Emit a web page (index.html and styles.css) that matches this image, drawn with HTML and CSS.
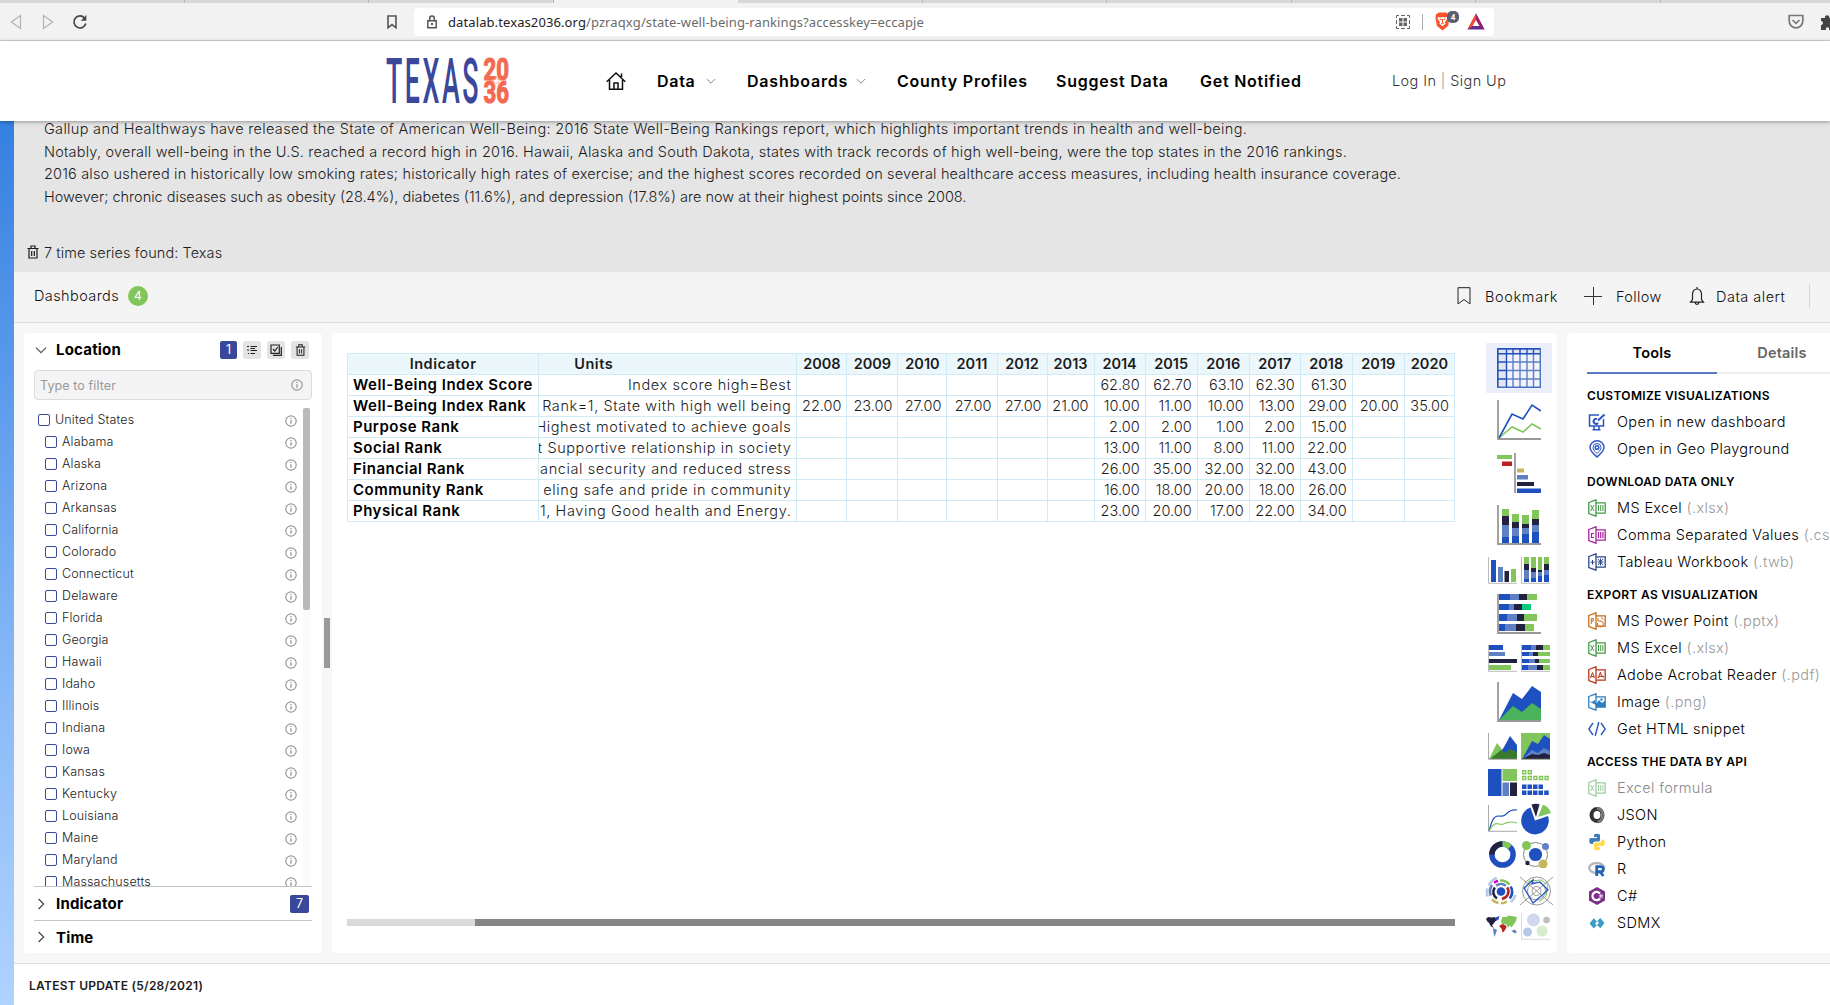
FILE: index.html
```html
<!DOCTYPE html>
<html lang="en">
<head>
<meta charset="utf-8">
<title>State Well-Being Rankings</title>
<link rel="stylesheet" href="styles.css">
</head>
<body>
<svg class="defs" width="0" height="0" aria-hidden="true">
  <symbol id="info" viewBox="0 0 12 12"><circle cx="6" cy="6" r="5.2" fill="none" stroke="#999" stroke-width="1.200"/><path d="M6 5.2v3.6M6 2.9v1.2" stroke="#999" stroke-width="1.4"/></symbol>
  <symbol id="trash" viewBox="0 0 12 14"><path d="M.5 3.5h11M4 3V1h4v2M2 4v9h8V4M4.7 6v5M7.300 6v5" fill="none" stroke="currentColor" stroke-width="1.200"/></symbol>
  <symbol id="chev" viewBox="0 0 10 10"><path d="M.8 3l4.200 4.200L9.200 3" fill="none" stroke="currentColor" stroke-width="1"/></symbol>
  <symbol id="book" viewBox="0 0 18 18"><path d="M.8 3.500L8 .8v16.400L.8 14.500zM8 3.800h9.200v10.400H8" fill="none" stroke="currentColor" stroke-width="1.300"/></symbol>
  <symbol id="excel" viewBox="0 0 18 18"><use href="#book"/><path d="M2.600 6l3.400 6M6 6l-3.400 6M10.500 6v6M12.700 6v6M14.900 6v6" stroke="currentColor" fill="none"/></symbol>
</svg>

<header class="browser">
  <div class="tabs"><i></i><i></i><i></i><i class="on"></i><i></i><i></i><i></i><i></i><i></i><i></i></div>
  <div class="toolbar">
    <svg class="b-back" width="12" height="16" viewBox="0 0 12 16"><path d="M10.500 1.500v13L1.500 8z" fill="none" stroke="#b5b5b5" stroke-width="1.300"/></svg>
    <svg class="b-fwd" width="12" height="16" viewBox="0 0 12 16"><path d="M1.500 1.500v13L10.500 8z" fill="none" stroke="#b5b5b5" stroke-width="1.300"/></svg>
    <svg class="b-reload" width="16" height="16" viewBox="0 0 16 16"><path d="M12.500 4A6 6 0 1 0 13.800 9.500" fill="none" stroke="#444" stroke-width="1.700"/><path d="M14.300 1v5.800H8.800z" fill="#444"/></svg>
    <svg class="b-mark" width="10" height="14" viewBox="0 0 10 14"><path d="M1 1h8v11.800L5 9.600l-4 3.200z" fill="none" stroke="#555" stroke-width="1.600"/></svg>
    <div class="url">
      <svg width="12" height="14" viewBox="0 0 12 14"><path d="M1.800 5.800h8.400v7H1.800zM3.700 5.500V3.300a2.300 2.300 0 0 1 4.600 0v2.200" fill="none" stroke="#555" stroke-width="1.500"/><path d="M5 8h2v2H5z" fill="#555"/></svg>
      <span class="addr"><b>datalab.texas2036.org</b>/pzraqxg/state-well-being-rankings?accesskey=eccapje</span>
      <svg class="qr" width="14" height="14" viewBox="0 0 14 14"><path d="M.5 3V.5H3M5 .5h4M11 .5h2.500V3M13.500 5v4M13.500 11v2.500H11M9 13.500H5M3 13.500H.500V11M.5 9V5" fill="none" stroke="#666"/><path d="M3 3h3.500v3.500H3zM7.500 3H11v3.500H7.500zM3 7.500h3.500V11H3zM7.500 7.500H11V11H7.500z" fill="#666"/></svg>
      <i class="sep"></i>
      <span class="shield"><svg width="15" height="19" viewBox="0 0 15 19"><path d="M3.500.5h8l1 1.200 1.500.2.500 3.600-1.300 8.300L7.500 18.500 1.800 13.800.5 5.500 1 1.900l1.500-.2z" fill="#fb542b"/><path d="M3 5l2.500.5 2-.6 2 .6L12 5l.3 2-2.300 3 .5 1.800-3 2.400-3-2.400.5-1.800-2.300-3z" fill="#fff"/><path d="M4.500 7l2 .6M10.500 7l-2 .6M7.500 7v4M6 12l1.500-.8L9 12" stroke="#fb542b" fill="none"/></svg><em>4</em></span>
      <svg class="bat" width="18" height="17" viewBox="0 0 18 17"><path d="M9 .5L17.500 16.500H.5z" fill="#662d91"/><path d="M9 .5L.5 16.500 5.500 13 9 7z" fill="#ff4724"/><path d="M9 .5l8.500 16L12.500 13 9 7z" fill="#9e1f63"/><path d="M9 7l3.500 6h-7z" fill="#fff"/></svg>
    </div>
    <svg class="pocket" width="16" height="16" viewBox="0 0 16 16"><path d="M1.200 1.500h13.600V7a6.800 6.800 0 0 1-13.600 0z" fill="none" stroke="#777" stroke-width="1.700"/><path d="M4.500 6L8 9.300 11.500 6" fill="none" stroke="#777" stroke-width="1.700"/></svg>
    <svg class="puzzle" width="16" height="16" viewBox="0 0 16 16"><path d="M1 4h4a2.200 2.200 0 1 1 4.200 0H13v4h2v4h-2v4H9v-2.500H6V16H1v-5a2 2 0 1 0 0-4z" fill="#444"/></svg>
  </div>
</header>

<nav class="nav">
  <svg class="logo" width="126" height="50" viewBox="0 0 126 50">
    <text class="logo-t" x="1" y="46.700" textLength="95" lengthAdjust="spacingAndGlyphs">TEXAS</text>
    <text class="logo-n" x="98.500" y="24" textLength="25.500" lengthAdjust="spacingAndGlyphs">20</text>
    <text class="logo-n" x="98.500" y="47" textLength="25.500" lengthAdjust="spacingAndGlyphs">36</text>
    <path d="M111.500 20.500l1.200 3h3.300l-2.600 2.100 1.100 3.400-3-2-3 2 1.100-3.400-2.600-2.100h3.300z" fill="#fff" stroke="#f26a50" stroke-width=".5"/>
  </svg>
  <svg class="home" width="20" height="18" viewBox="0 0 20 18"><path d="M.7 9.700L10 1l9.300 8.700M3.500 8v9.300h13V8M8 17v-6h4v6M15.500 5V1.500" fill="none" stroke="#111" stroke-width="1.500"/></svg>
  <span class="n-data">Data</span><svg class="nch" width="10" height="10"><use href="#chev"/></svg>
  <span class="n-dash">Dashboards</span><svg class="nch" width="10" height="10"><use href="#chev"/></svg>
  <span class="n-cp">County Profiles</span>
  <span class="n-sd">Suggest Data</span>
  <span class="n-gn">Get Notified</span>
  <span class="n-log">Log In <i>|</i> Sign Up</span>
</nav>

<div class="page">
  <section class="intro">
    <p class="l1">Gallup and Healthways have released the State of American Well-Being: 2016 State Well-Being Rankings report, which highlights important trends in health and well-being.</p>
    <p class="l2">Notably, overall well-being in the U.S. reached a record high in 2016. Hawaii, Alaska and South Dakota, states with track records of high well-being, were the top states in the 2016 rankings.</p>
    <p class="l3">2016 also ushered in historically low smoking rates; historically high rates of exercise; and the highest scores recorded on several healthcare access measures, including health insurance coverage.</p>
    <p class="l4">However; chronic diseases such as obesity (28.4%), diabetes (11.6%), and depression (17.8%) are now at their highest points since 2008.</p>
    <div class="found"><svg width="12" height="14"><use href="#trash"/></svg><span>7 time series found: Texas</span></div>
  </section>

  <section class="actions">
    <span class="a-dash">Dashboards</span><b class="count">4</b>
    <svg class="a-mk" width="14" height="18" viewBox="0 0 14 18"><path d="M1 .7h12v16.300L7 12.500 1 17z" fill="none" stroke="#222" stroke-width="1"/></svg><span class="a-b">Bookmark</span>
    <svg class="a-pl" width="18" height="18" viewBox="0 0 18 18"><path d="M0 9.500h18M9.500 0v18" stroke="#333" stroke-width="1"/></svg><span class="a-f">Follow</span>
    <svg class="a-be" width="16" height="20" viewBox="0 0 16 20"><path d="M1.500 16.200h13l-2-2.700V8a4.500 5 0 0 0-9 0v5.500zM6.200 16.500a1.800 1.800 0 0 0 3.600 0M8 3V1" fill="none" stroke="#222" stroke-width="1.200"/></svg><span class="a-d">Data alert</span>
    <i class="a-sep"></i>
  </section>

  <main class="work">
    <aside class="filters">
      <div class="f-head">
        <svg class="fch" width="12" height="12"><use href="#chev"/></svg><h2>Location</h2>
        <b class="num">1</b>
        <i class="btn"><svg width="12" height="12" viewBox="0 0 12 12"><path d="M1 2.500h2M1 6h2M2 9.500h1M4.500 2.500H11M4.500 4.500H9M4.500 6.500H11M4.500 9.500H9" stroke="#222" stroke-width="1.200"/></svg></i>
        <i class="btn"><svg width="12" height="12" viewBox="0 0 12 12"><path d="M1 1h8.300v8.300H1zM11.300 3v8.300H3M3 5l1.800 2 3-4" fill="none" stroke="#222" stroke-width="1.200"/></svg></i>
        <i class="btn"><svg width="11" height="12"><use href="#trash"/></svg></i>
      </div>
      <div class="input"><span>Type to filter</span><svg width="12" height="12"><use href="#info"/></svg></div>
      <div class="list-wrap">
        <ul class="list">
          <li class="root"><i></i><span>United States</span><svg><use href="#info"/></svg></li>
          <li><i></i><span>Alabama</span><svg><use href="#info"/></svg></li>
          <li><i></i><span>Alaska</span><svg><use href="#info"/></svg></li>
          <li><i></i><span>Arizona</span><svg><use href="#info"/></svg></li>
          <li><i></i><span>Arkansas</span><svg><use href="#info"/></svg></li>
          <li><i></i><span>California</span><svg><use href="#info"/></svg></li>
          <li><i></i><span>Colorado</span><svg><use href="#info"/></svg></li>
          <li><i></i><span>Connecticut</span><svg><use href="#info"/></svg></li>
          <li><i></i><span>Delaware</span><svg><use href="#info"/></svg></li>
          <li><i></i><span>Florida</span><svg><use href="#info"/></svg></li>
          <li><i></i><span>Georgia</span><svg><use href="#info"/></svg></li>
          <li><i></i><span>Hawaii</span><svg><use href="#info"/></svg></li>
          <li><i></i><span>Idaho</span><svg><use href="#info"/></svg></li>
          <li><i></i><span>Illinois</span><svg><use href="#info"/></svg></li>
          <li><i></i><span>Indiana</span><svg><use href="#info"/></svg></li>
          <li><i></i><span>Iowa</span><svg><use href="#info"/></svg></li>
          <li><i></i><span>Kansas</span><svg><use href="#info"/></svg></li>
          <li><i></i><span>Kentucky</span><svg><use href="#info"/></svg></li>
          <li><i></i><span>Louisiana</span><svg><use href="#info"/></svg></li>
          <li><i></i><span>Maine</span><svg><use href="#info"/></svg></li>
          <li><i></i><span>Maryland</span><svg><use href="#info"/></svg></li>
          <li><i></i><span>Massachusetts</span><svg><use href="#info"/></svg></li>
        </ul>
        <div class="vtrack"><i></i></div>
      </div>
      <div class="f-row"><svg class="side" width="12" height="12"><use href="#chev"/></svg><h2>Indicator</h2><b class="num wide">7</b></div>
      <div class="f-row last"><svg class="side" width="12" height="12"><use href="#chev"/></svg><h2>Time</h2></div>
    </aside>
    <div class="splitter"></div>

    <section class="view">
      <div class="grid-area">
        <table class="grid">
          <colgroup><col class="c-ind"><col class="c-unit"><col class="w50"><col class="w51"><col class="w49"><col class="w50"><col class="w50"><col class="w47"><col class="w51"><col class="w52"><col class="w52"><col class="w51"><col class="w52"><col class="w52"><col class="w50"></colgroup>
          <thead><tr><th>Indicator</th><th class="units">Units</th><th>2008</th><th>2009</th><th>2010</th><th>2011</th><th>2012</th><th>2013</th><th>2014</th><th>2015</th><th>2016</th><th>2017</th><th>2018</th><th>2019</th><th>2020</th></tr></thead>
          <tbody>
            <tr><th>Well-Being Index Score</th><td><div><span>Index score high=Best</span></div></td><td></td><td></td><td></td><td></td><td></td><td></td><td>62.80</td><td>62.70</td><td>63.10</td><td>62.30</td><td>61.30</td><td></td><td></td></tr>
            <tr><th>Well-Being Index Rank</th><td><div><span>Rank=1, State with high well being</span></div></td><td>22.00</td><td>23.00</td><td>27.00</td><td>27.00</td><td>27.00</td><td>21.00</td><td>10.00</td><td>11.00</td><td>10.00</td><td>13.00</td><td>29.00</td><td>20.00</td><td>35.00</td></tr>
            <tr><th>Purpose Rank</th><td><div><span>Highest motivated to achieve goals</span></div></td><td></td><td></td><td></td><td></td><td></td><td></td><td>2.00</td><td>2.00</td><td>1.00</td><td>2.00</td><td>15.00</td><td></td><td></td></tr>
            <tr><th>Social Rank</th><td><div><span>t Supportive relationship in society</span></div></td><td></td><td></td><td></td><td></td><td></td><td></td><td>13.00</td><td>11.00</td><td>8.00</td><td>11.00</td><td>22.00</td><td></td><td></td></tr>
            <tr><th>Financial Rank</th><td><div><span>nancial security and reduced stress</span></div></td><td></td><td></td><td></td><td></td><td></td><td></td><td>26.00</td><td>35.00</td><td>32.00</td><td>32.00</td><td>43.00</td><td></td><td></td></tr>
            <tr><th>Community Rank</th><td><div><span>eling safe and pride in community</span></div></td><td></td><td></td><td></td><td></td><td></td><td></td><td>16.00</td><td>18.00</td><td>20.00</td><td>18.00</td><td>26.00</td><td></td><td></td></tr>
            <tr><th>Physical Rank</th><td><div><span>=1, Having Good health and Energy.</span></div></td><td></td><td></td><td></td><td></td><td></td><td></td><td>23.00</td><td>20.00</td><td>17.00</td><td>22.00</td><td>34.00</td><td></td><td></td></tr>
          </tbody>
        </table>
        <div class="htrack"><i></i></div>
      </div>
      <div class="charts">
        <div class="sel"><svg width="44" height="40" viewBox="0 0 44 40"><path d="M1 1h42v38H1z" fill="#f1f4fb"/><path d="M1 1h9v38H1zM10 1h33v4H10z" fill="#e4e4ea"/><path d="M16 6v33M23 6v33M30 6v33M36.500 6v33M10 14h33M10 31h33" stroke="#5f80c2" stroke-width="1.400"/><path d="M10 22.500h33" stroke="#5f80c2" stroke-width="1.600"/><path d="M.7.700h42.600v38.600H.7z" fill="none" stroke="#4a70c0" stroke-width="1.400"/><path d="M.7 39V.700H43M9.500 1v38M1 5.700h42M1 14h8M1 22.500h8M1 31h8M16 1v4M23 1v4M30 1v4M36.500 1v4" fill="none" stroke="#1f4fc0" stroke-width="1.400"/></svg></div>
        <div><svg width="44" height="40" viewBox="0 0 44 40"><path d="M1 0v39h43" fill="none" stroke="#999" stroke-width="1.800"/><path d="M2 38l13-11 11 5 9-8 9 5" fill="none" stroke="#82c55b" stroke-width="1.600"/><path d="M2 38l13-24 11 5L35 5l9 6" fill="none" stroke="#1f50c0" stroke-width="1.600"/></svg></div>
        <div><svg width="44" height="40" viewBox="0 0 44 40"><path d="M18 0v40" stroke="#999" stroke-width="1.800"/><path d="M0 2h15v4H0z" fill="#82c55b"/><path d="M5 8.500h10v4.500H5z" fill="#bb2222"/><path d="M20 15.500h7v4h-7z" fill="#c4b65a"/><path d="M20 22h11v4.500H20z" fill="#6080c4"/><path d="M20 29h17v4H20z" fill="#22213f"/><path d="M20 35.500h24v4.500H20z" fill="#1f50c0"/></svg></div>
        <div><svg width="44" height="40" viewBox="0 0 44 40"><path d="M1 0v39h43" fill="none" stroke="#999" stroke-width="1.800"/><path d="M5 4h7v7H5zM15 9h7v8h-7zM25 10h7v9h-7zM35 5h7v9h-7z" fill="#82c55b"/><path d="M5 11h7v9H5zM15 17h7v6h-7zM25 19h7v4h-7zM35 14h7v6h-7z" fill="#22213f"/><path d="M5 20h7v12H5zM15 23h7v8h-7zM25 23h7v6h-7zM35 20h7v7h-7z" fill="#6080c4"/><path d="M5 32h7v6H5zM15 31h7v7h-7zM25 29h7v9h-7zM35 27h7v11h-7z" fill="#1f50c0"/></svg></div>
        <div><svg width="29" height="27" viewBox="0 0 29 27"><path d="M.5 0v26.300H29" fill="none" stroke="#bbb"/><path d="M3 3h5v22H3z" fill="#1f50c0"/><path d="M10 10h5v15h-5z" fill="#6080c4"/><path d="M16.500 14h4.500v11h-4.500z" fill="#22213f"/><path d="M23 12h5v13h-5z" fill="#82c55b"/></svg><svg width="29" height="27" viewBox="0 0 29 27"><path d="M.5 0v26.300H29" fill="none" stroke="#bbb"/><path d="M3 0h5v7H3zM10 0h5v11h-5zM17 0h4v13h-4zM23 0h5v7h-5z" fill="#82c55b"/><path d="M3 7h5v6H3zM10 11h5v4h-5zM17 13h4v2h-4zM23 7h5v6h-5z" fill="#22213f"/><path d="M3 13h5v9H3zM10 15h5v6h-5zM17 15h4v4h-4zM23 13h5v5h-5z" fill="#6080c4"/><path d="M3 22h5v3H3zM10 21h5v4h-5zM17 19h4v6h-4zM23 18h5v7h-5z" fill="#1f50c0"/></svg></div>
        <div><svg width="44" height="40" viewBox="0 0 44 40"><path d="M1 0v39h43" fill="none" stroke="#999" stroke-width="1.800"/><path d="M2 0h11v6H2zM2 10h10v6H2zM2 20h8v7H2zM2 30h6v7H2z" fill="#1f50c0"/><path d="M13 0h9v6h-9zM12 10h5v6h-5zM10 20h10v7H10zM8 30h11v7H8z" fill="#6080c4"/><path d="M22 0h8v6h-8zM17 10h8v6h-8zM20 20h7v7h-7zM19 30h9v7h-9z" fill="#22213f"/><path d="M30 0h10v6H30zM27 20h13v7H27zM28 30h9v7h-9z" fill="#82c55b"/><path d="M25 10h9v6h-9z" fill="#08c97c"/></svg></div>
        <div><svg width="29" height="27" viewBox="0 0 29 27"><path d="M.5 0v26.300H29" fill="none" stroke="#bbb"/><path d="M1 0h14v5H1z" fill="#1f50c0"/><path d="M1 7h16v4H1z" fill="#6080c4"/><path d="M1 14h28v4H1z" fill="#22213f"/><path d="M1 20h22v5H1z" fill="#82c55b"/></svg><svg width="29" height="27" viewBox="0 0 29 27"><path d="M.5 0v26.300H29" fill="none" stroke="#bbb"/><path d="M1 0h9v5H1zM1 7h7v4H1zM1 14h7v4H1zM1 20h6v5H1z" fill="#1f50c0"/><path d="M10 0h5v5h-5zM8 7h4v4H8zM8 14h6v4H8zM7 20h9v5H7z" fill="#6080c4"/><path d="M15 0h7v5h-7zM12 7h5v4h-5zM14 14h4v4h-4zM16 20h6v5h-6z" fill="#22213f"/><path d="M22 0h7v5h-7zM17 7h12v4H17zM18 14h11v4H18zM22 20h7v5h-7z" fill="#82c55b"/></svg></div>
        <div><svg width="44" height="40" viewBox="0 0 44 40"><path d="M2 38l14-27 9 6L35 4l9 6v28z" fill="#1f50c0"/><path d="M2 38l14-14 9 6 10-9 9 6v11z" fill="#49b45c"/><path d="M1 0v39h43" fill="none" stroke="#999" stroke-width="1.800"/></svg></div>
        <div><svg width="29" height="27" viewBox="0 0 29 27"><path d="M1 26l8-16 7 9 6 7z" fill="#82c55b"/><path d="M8 26l8-12 6-11 7 9v14z" fill="#1f50c0"/><path d="M2 26l5-4 6-5 5 3 4-4 7 3v7z" fill="#3a7a2c"/><path d="M.5 0v26.300H29" fill="none" stroke="#aaa"/></svg><svg width="29" height="27" viewBox="0 0 29 27"><path d="M0 0h29v27H0z" fill="#82c55b"/><path d="M1 26L11 8l6 3 6-9 6 4v20z" fill="#1f50c0"/><path d="M1 26l10-9 6 3 6-5 6 3v8z" fill="#6080c4"/><path d="M1 26l10-5 6 1 6-2 6 2v4z" fill="#22213f"/><path d="M.5 0v26.300H29" fill="none" stroke="#aaa"/></svg></div>
        <div><svg width="29" height="27" viewBox="0 0 29 27"><path d="M0 0h13.500v27H0z" fill="#1f50c0"/><path d="M14.500 0H29v12H14.500z" fill="#82c55b"/><path d="M14.500 13.500H21V27h-6.500z" fill="#6080c4"/><path d="M22 13.500h7V27h-7z" fill="#22213f"/></svg><svg width="29" height="27" viewBox="0 0 29 27"><path d="M1.700 1.700h3v3h-3zM7.300 1.700h3v3h-3zM1.700 7.500h3v3h-3zM7.300 7.500h3v3h-3zM12.900 7.500h3v3h-3zM18.500 7.500h3v3h-3zM24.100 7.500h3v3h-3z" fill="none" stroke="#82c55b" stroke-width="1.400"/><path d="M1 15.500h4.500V20H1zM6.500 15.500H11V20H6.500zM12 15.500h4.500V20H12zM17.500 15.500H22V20h-4.500zM1 21.500h4.500V26H1zM6.500 21.500H11V26H6.500zM12 21.500h4.500V26H12zM17.500 21.500H22V26h-4.500zM23.200 21.500h4.500V26h-4.500z" fill="#1f50c0"/></svg></div>
        <div><svg width="29" height="27" viewBox="0 0 29 27"><path d="M.5 0v26.300H29" fill="none" stroke="#aaa"/><path d="M1 26C4 15 6 11 10 11s4 1 7-1 4-6 12-5" fill="none" stroke="#1f50c0" stroke-width="1.200"/><path d="M1 26c4-7 6-8 10-7s4 0 7-1 4-2 11 0" fill="none" stroke="#82c55b" stroke-width="1.200"/></svg><svg class="pie" width="31" height="32" viewBox="0 0 31 32"><path d="M14 17.500L9.500 4.500A13.800 13.800 0 1 0 27 13z" fill="#1f50c0"/><path d="M15 14L10.500 1.500Q15 0 18.500 1.200z" fill="#22213f"/><path d="M17 14l5-12.500A14 14 0 0 1 30 10z" fill="#82c55b"/></svg></div>
        <div><svg width="29" height="27" viewBox="0 0 29 27"><g fill="none" stroke-width="5.500"><circle cx="14.500" cy="13.500" r="10.600" stroke="#1f50c0"/><path d="M3.900 13.500A10.600 10.600 0 0 1 14.500 2.900" stroke="#22213f"/><path d="M14.500 2.900a10.600 10.600 0 0 1 7.500 3.100" stroke="#82c55b"/></g></svg><svg width="29" height="27" viewBox="0 0 29 27"><circle cx="14.500" cy="13.500" r="12" fill="none" stroke="#888"/><circle cx="14.500" cy="13.500" r="6.600" fill="#1f50c0"/><circle cx="5.500" cy="4.500" r="4.500" fill="#82c55b"/><circle cx="24.500" cy="5.500" r="3.500" fill="#6080c4"/><circle cx="22" cy="23" r="4.500" fill="#c4b65a"/><circle cx="6.500" cy="22" r="2.200" fill="#22213f"/></svg></div>
        <div><svg class="sun" width="32" height="30" viewBox="0 0 32 30"><circle cx="16" cy="15.500" r="4.300" fill="#1f50c0"/><g fill="none" stroke-width="2.600"><path d="M12 22.400A7.500 7.500 0 0 1 9.800 11.500" stroke="#22213f"/><path d="M11.200 9.700a7.500 7.500 0 0 1 9.600 0" stroke="#6080c4"/><path d="M22.200 11.400a7.500 7.500 0 0 1-5.200 11.500" stroke="#bb2222"/><path d="M5.800 19.500a11 11 0 0 1 1.200-10.500" stroke="#6080c4"/><path d="M9 6.700l4-2" stroke="#d000d0"/><path d="M15 4.500a11 11 0 0 1 9.500 4" stroke="#82c55b"/><path d="M25.700 10.500a11 11 0 0 1-1 12" stroke="#1f50c0"/><path d="M7 23.500a12 12 0 0 0 6.500 3.500M16 27.300a12 12 0 0 0 6-1.800" stroke="#c4b65a"/><path d="M2.500 20.500a14 14 0 0 1 0-8M3.800 9.500a14 14 0 0 1 8-7.500M26 26q3.500-3 4.500-7" stroke="#b9c8e6"/></g></svg><svg class="radar" width="33" height="30" viewBox="0 0 33 30"><g fill="none" stroke="#999"><circle cx="16.500" cy="15" r="14"/><circle cx="16.500" cy="15" r="9"/><circle cx="16.500" cy="15" r="4.500"/><path d="M0 1l33 28M33 1L0 29"/></g><path d="M5 13L9 5l12-1 7 5-2 11-7 6" fill="none" stroke="#82c55b"/><path d="M13 4L4 12l9 15L28 14 20 6l-8 2z" fill="none" stroke="#1f50c0" stroke-width="1.200"/></svg></div>
        <div><svg class="map" width="32" height="24" viewBox="0 0 32 24"><path d="M0 5l2-2 4 .5 3-.5 1.500 3L8 9l-2 2.500L8 14l-3-1.500L3 9 1 7z" fill="#22213f"/><path d="M9.500 3.500l4-1.500-1 3.500-2 1.500z" fill="#1f50c0"/><path d="M7 14l4 2-1 3-1.500 4L7.500 19z" fill="#6080c4"/><path d="M15 7l1.500-4L20 3l3-1.500L31 3l-1 4-3 4.500-1.500 2-1.500-2-2 2-2-3.500-4 .5z" fill="#82c55b"/><path d="M13 12l3.500-2 3.500 1.500.5 2-2.500 4-1.500 1-1-4z" fill="#bb2222"/><path d="M25.500 17l3-1.500 2.500 2.500-2 1.500z" fill="#6080c4"/></svg><svg width="29" height="27" viewBox="0 0 29 27"><path d="M.5 0v26.300H29" fill="none" stroke="#ddd"/><circle cx="12.500" cy="7" r="6.500" fill="#cfd8ee"/><circle cx="25.500" cy="7" r="3.300" fill="#bdbdc4"/><circle cx="6.500" cy="19" r="4.500" fill="#b9c8e8"/><circle cx="21" cy="18" r="5.500" fill="#d7eccb"/></svg></div>
      </div>
    </section>

    <aside class="tools">
      <div class="t-tabs"><b class="on">Tools</b><b class="off">Details</b></div>
      <h3>CUSTOMIZE VISUALIZATIONS</h3>
      <p><svg class="blue" viewBox="0 0 18 18"><path d="M11 2H1.500v11h14V6M6 13.500v3.200h5v-3.200M4.500 16.700h8" fill="none" stroke="currentColor" stroke-width="1.500"/><path d="M16.500 1.500L10 7.500M9 6a2.500 2.500 0 1 0 1 4" fill="none" stroke="currentColor" stroke-width="2"/></svg>Open in new dashboard</p>
      <p><svg class="blue" viewBox="0 0 18 18"><path d="M9 17C5 13.500 2 11 2 7.500a7 6.700 0 0 1 14 0C16 11 13 13.500 9 17z" fill="none" stroke="currentColor" stroke-width="1.400"/><path d="M9 13.500c-3-3-4-4-4-6a4 4 0 0 1 8 0c0 2-1 3-4 6z" fill="none" stroke="currentColor"/><circle cx="9" cy="7.500" r="1.800" fill="none" stroke="currentColor" stroke-width="1.500"/></svg>Open in Geo Playground</p>
      <h3>DOWNLOAD DATA ONLY</h3>
      <p><svg class="green"><use href="#excel"/></svg>MS Excel <em>(.xlsx)</em></p>
      <p><svg class="mag" viewBox="0 0 18 18"><use href="#book"/><path d="M6 7.500H3.500v4H6M10.500 6v6M12.700 6v6M14.900 6v6" fill="none" stroke="currentColor" stroke-width="1.200"/></svg>Comma Separated Values <em>(.csv)</em></p>
      <p><svg class="navy" viewBox="0 0 18 18"><use href="#book"/><path d="M2.500 9.200h4M4.500 7v4.500M10 6l5 6M15 6l-5 6M9.500 9h6M12.500 5.500v7" fill="none" stroke="currentColor"/></svg>Tableau Workbook <em>(.twb)</em></p>
      <h3>EXPORT AS VISUALIZATION</h3>
      <p><svg class="orange" viewBox="0 0 18 18"><use href="#book"/><path d="M3.300 12V6.500h2V9h-2M10 6v3h3a3 3 0 1 1-3.500 2M13 5.500l2.500 2" fill="none" stroke="currentColor"/></svg>MS Power Point <em>(.pptx)</em></p>
      <p><svg class="green"><use href="#excel"/></svg>MS Excel <em>(.xlsx)</em></p>
      <p><svg class="red" viewBox="0 0 18 18"><use href="#book"/><path d="M2.500 12l2-5.500 2 5.500M3 10.500h3M10 12l2.500-6 .5 3 3 2-4-.8z" fill="none" stroke="currentColor"/></svg>Adobe Acrobat Reader <em>(.pdf)</em></p>
      <p><svg class="sky" viewBox="0 0 18 18"><use href="#book"/><path d="M1 8l3 1 3-2 1 4 3-4 3 3 3-2v6H8v-2l-4-2z" fill="currentColor"/><circle cx="13.500" cy="6.500" r="1.200" fill="currentColor"/></svg>Image <em>(.png)</em></p>
      <p><svg class="blue" viewBox="0 0 18 18"><path d="M5 3L.8 9 5 15M13 3l4.200 6L13 15M10.800 2L7.200 16" fill="none" stroke="currentColor" stroke-width="1.400"/></svg>Get HTML snippet</p>
      <h3>ACCESS THE DATA BY API</h3>
      <p class="dim"><svg class="green"><use href="#excel"/></svg>Excel formula</p>
      <p><svg viewBox="0 0 18 18"><ellipse cx="9" cy="9" rx="5.500" ry="6" fill="none" stroke="#333" stroke-width="4"/><path d="M9 2.500q6 0 5.500 7t-5 6" fill="none" stroke="#777" stroke-width="3"/></svg>JSON</p>
      <p><svg viewBox="0 0 18 18"><path d="M6 1.500q3-1.500 6 0V7q0 1.500-1.500 1.500H7Q5 8.500 5 11H3Q1 10.500 1.200 7.500T3 5h6V4H6z" fill="#3f7fb5"/><path d="M12 16.500q-3 1.500-6 0V11q0-1.500 1.500-1.500H11q2.500 0 2.500-3h1.700Q17 7 16.800 10T15 13H9v1h3z" fill="#ffdb4d"/></svg>Python</p>
      <p><svg viewBox="0 0 18 18"><ellipse cx="8.700" cy="8" rx="7.500" ry="5" fill="none" stroke="#b4b6bb" stroke-width="2.300"/><path d="M8.700 16V6.700h4a2.400 2.400 0 0 1 0 5H9M12 11.500l3.300 4.500" fill="none" stroke="#1f66b7" stroke-width="2.800"/></svg>R</p>
      <p><svg viewBox="0 0 18 18"><path d="M9 0l8 4.500v9L9 18l-8-4.500v-9z" fill="#7c2f8a"/><path d="M12 6.500a4.200 4.200 0 1 0 0 5" fill="none" stroke="#fff" stroke-width="2.200"/><path d="M11 8.300h4M11 9.900h4M12.300 7v4.300M13.900 7v4.300" stroke="#fff" stroke-width=".6"/></svg>C#</p>
      <p><svg viewBox="0 0 18 18"><path d="M5.700 4.800L9 8.100l-2 2 1.800 1.800-3.100 3L1.500 10z" transform="translate(0 -.5)" fill="#3c9cc8"/><path d="M12.300 14.200L9 10.900l2-2-1.800-1.800 3.100-3L16.500 9z" fill="#3c9cc8"/></svg>SDMX</p>
    </aside>
  </main>
  <footer>LATEST UPDATE (5/28/2021)</footer>
</div>
</body>
</html>
```
FILE: styles.css
```css
* { box-sizing: border-box; }
html, body { margin: 0; height: 1005px; overflow: hidden; }
body { width: 1830px; font-family: Inter, "Open Sans", sans-serif; font-weight: 300; color: #1c1c1c; background: #fff; display: flex; flex-direction: column; }
svg { flex: none; display: block; }
.defs { position: absolute; }
p, h2, h3, ul { margin: 0; padding: 0; }
em, i { font-style: normal; }
span { white-space: nowrap; }

/* browser chrome */
.browser { height: 41px; background: #f2f2f2; border-bottom: 1px solid #d3d3d3; flex: none; }
.tabs { display: flex; height: 3px; overflow: hidden; }
.tabs i { flex: 0 0 184.500px; background: #d5d9dc; border-right: 1px solid #b4b9bd; }
.tabs .on { background: #f2f2f2; border: 0; }
.toolbar { display: flex; align-items: center; height: 37px; overflow: hidden; }
.b-back { margin-left: 10px; }
.b-fwd { margin-left: 20px; }
.b-reload { margin-left: 18px; }
.b-mark { margin-left: 299px; }
.url { margin-left: 17px; flex: none; width: 1080px; height: 28px; background: #fff; border-radius: 4px; display: flex; align-items: center; padding-left: 12px; }
.addr { margin-left: 10px; font: 400 13px "Noto Sans", sans-serif; letter-spacing: .1px; color: #6b6b6b; width: 938px; }
.addr b { font-weight: 400; color: #222; }
.qr { margin-left: 10px; }
.sep { width: 1px; height: 16px; background: #aaa; margin: 0 12px; }
.shield { position: relative; width: 32px; }
.shield em { position: absolute; left: 12px; top: -1px; width: 12px; height: 12px; border-radius: 5px; background: #5b5e73; color: #fff; font: 700 8px/12px "Open Sans", sans-serif; text-align: center; }
.pocket { margin-left: 294px; }
.puzzle { margin-left: 16px; }

/* site navigation */
.nav { position: relative; z-index: 2; height: 80px; flex: none; background: #fff; box-shadow: 0 1px 4px rgba(0,0,0,.35); display: flex; align-items: center; font-size: 16px; font-weight: 600; color: #000; }
.logo { margin-left: 385px; overflow: visible; }
.logo-t { font: 500 63px Roboto, sans-serif; letter-spacing: 6px; fill: #3a489c; }
.logo-n { font: 700 31px Roboto, sans-serif; fill: #f26a50; stroke: #f26a50; stroke-width: 1.200px; }
.home { margin-left: 95px; width: 20px; }
.nch { margin-left: 9px; color: #888; }
.nav span { letter-spacing: .45px; padding-bottom: 1px; }
.nav .n-data { margin-left: 31px; width: 40px; letter-spacing: .7px; }
.nav .n-dash { margin-left: 31px; width: 100px; letter-spacing: .8px; }
.nav .n-cp { margin-left: 31px; width: 129px; letter-spacing: .75px; }
.nav .n-sd { margin-left: 30px; width: 114px; letter-spacing: .75px; }
.nav .n-gn { margin-left: 30px; width: 103px; letter-spacing: .75px; }
.nav .n-log { margin-left: 89px; font-size: 14.500px; font-weight: 300; color: #333; padding-bottom: 2px; letter-spacing: .4px; }
.n-log i { color: #999; }

/* page body with the blue margin strip */
.page { flex: 1; display: flex; flex-direction: column; border-left: 14px solid; border-image: linear-gradient(#3580e0, #8abaf7 65%, #b0d3ff) 1; background: #f7f7f7; }
.intro { height: 151px; flex: none; background: #e5e5e5; padding: 0 0 0 30px; overflow: hidden; font-size: 14.500px; }
.intro p { line-height: 22.600px; white-space: nowrap; }
.intro p:first-child { margin-top: -3px; }
.intro .l1 { letter-spacing: .32px; }
.intro .l2 { letter-spacing: .2px; }
.intro .l3 { letter-spacing: .17px; }
.found { display: flex; align-items: center; margin: 33px 0 0 -17px; height: 22px; }
.found span { margin-left: 5px; letter-spacing: .08px; }
.actions { height: 51px; flex: none; background: #f4f4f4; border-bottom: 1px solid #dfdfdf; display: flex; align-items: center; padding-left: 20px; font-size: 14.500px; color: #111; padding-bottom: 2px; }
.actions .a-dash { width: 85px; letter-spacing: .4px; padding-bottom: 1px; }
.count { margin-left: 9px; width: 20px; height: 20px; border-radius: 50%; background: #82c55b; color: #fff; font-weight: 400; font-size: 12px; line-height: 20px; text-align: center; }
.a-mk { margin-left: 1309px; }
.a-b { margin-left: 14px; width: 74px; letter-spacing: .65px; }
.a-pl { margin-left: 25px; }
.a-f { margin-left: 14px; width: 46px; letter-spacing: .35px; }
.a-be { margin-left: 27px; }
.a-d { margin-left: 11px; width: 71px; letter-spacing: .5px; }
.a-sep { margin-left: 22px; width: 1px; height: 24px; background: #d5d5d5; }

.work { height: 640px; flex: none; display: flex; padding: 10px 0 10px 10px; overflow: hidden; }
.filters { width: 298px; flex: none; background: #fff; border-radius: 4px; padding: 0 10px; }
.f-head { height: 37px; display: flex; align-items: center; padding-bottom: 3px; }
.fch { margin-left: 1px; color: #555; }
h2 { font-size: 15px; font-weight: 700; color: #000; letter-spacing: .2px; }
.f-head h2 { margin-left: 9px; width: 164px; padding-bottom: 2px; }
.num { width: 17px; height: 18px; background: #3a489c; color: #fff; font-size: 12.500px; line-height: 18px; text-align: center; border-radius: 2px; }
.btn { width: 18px; height: 18px; margin-left: 6px; background: #e3e3e3; border-radius: 3px; display: flex; align-items: center; justify-content: center; color: #222; }
.input { height: 30px; border: 1px solid #dcdcdc; border-radius: 4px; background: #f4f4f4; display: flex; align-items: center; justify-content: space-between; padding: 0 8px 0 5px; font-size: 12.500px; color: #999; font-weight: 400; letter-spacing: .1px; }
.list-wrap { height: 486px; overflow: hidden; display: flex; padding-top: 8px; }
.list { list-style: none; width: 269px; }
.list li { height: 22px; display: flex; align-items: center; padding-left: 11px; font-size: 12.500px; color: #222; letter-spacing: .15px; }
.list .root { padding-left: 4px; }
.list i { width: 12px; height: 12px; border: 1px solid #3a489c; border-radius: 2px; margin: 1px 5px 0 0; flex: none; }
.list span { flex: 1; }
.list svg { width: 12px; height: 12px; margin: 3px 6px 0 0; }
.vtrack { width: 7px; background: #fafafa; }
.vtrack i { display: block; height: 202px; border-radius: 2px; background: #b9b9b9; }
.f-row { height: 34px; border-top: 1px solid #c4c4c4; display: flex; align-items: center; }
.last { height: 33px; }
.side { transform: rotate(-90deg); color: #444; margin-left: 1px; }
.f-row h2 { margin-left: 9px; flex: 1; }
.wide { width: 19px; margin-right: 3px; }
.splitter { width: 6px; height: 50px; margin: 285px 2px 0; background: #999; flex: none; }

/* data grid and chart picker */
.view { width: 1225px; flex: none; background: #fff; border-radius: 4px; display: flex; }
.grid-area { width: 1128px; margin-left: 15px; padding-top: 20px; display: flex; flex-direction: column; }
.grid { width: 1108px; table-layout: fixed; border-collapse: collapse; font-size: 14.500px; }
.c-ind { width: 191px; } .c-unit { width: 258px; }
.w47 { width: 47px; } .w49 { width: 49px; } .w50 { width: 50px; } .w51 { width: 51px; } .w52 { width: 52px; }
.grid th, .grid td { height: 21px; line-height: 18px; padding: 0 5px 0 0; border: 1px solid #cfebf6; text-align: right; white-space: nowrap; }
.grid thead th { background: #ecf7fb; text-align: center; font-weight: 600; padding: 0; }
.grid thead th:first-child { letter-spacing: .5px; }
.grid tbody th { text-align: left; font-size: 15px; font-weight: 600; letter-spacing: .5px; color: #000; padding: 0 0 0 5px; }
.grid thead .units { padding-right: 148px; letter-spacing: .6px; }
.grid td div { display: flex; justify-content: flex-end; overflow: hidden; letter-spacing: .6px; }
.htrack { margin-top: auto; margin-bottom: 27px; width: 1108px; height: 7px; background: #dadada; }
.htrack i { display: block; height: 7px; margin-left: 128px; background: #858585; }
.charts { margin-left: 11px; width: 66px; display: grid; grid-template-rows: 50px 54px 52px 52px 38px 50px 39px 48px 41px 31px 41px 31px 41px 30px; padding-top: 10px; }
.charts div { display: flex; align-items: center; justify-content: center; gap: 4px; }
.charts .sel { background: #eaeffb; }
.charts .pie, .charts .radar { margin-right: -2px; }
.charts .sun, .charts .map { margin-left: -2px; margin-right: -1px; }

/* tools */
.tools { width: 330px; flex: none; margin-left: 10px; background: #fff; border-radius: 4px; padding-left: 20px; font-size: 14.500px; color: #000; }
.t-tabs { display: flex; height: 41px; border-bottom: 2px solid #eee; margin-bottom: 2px; }
.t-tabs b { width: 130px; height: 41px; line-height: 40px; text-align: center; font-weight: 600; font-size: 14.500px; letter-spacing: .2px; }
.t-tabs .on { border-bottom: 2px solid #5b7bc0; }
.t-tabs .off { color: #666; }
.tools h3 { font-size: 12px; line-height: 24px; padding-top: 8px; font-weight: 600; letter-spacing: .33px; white-space: nowrap; }
.tools p { height: 27px; display: flex; align-items: center; white-space: pre; letter-spacing: .36px; padding-bottom: 1px; }
.tools svg { width: 18px; height: 18px; margin: 1px 11px 0 1px; }
.tools em { color: #999; }
.tools .dim { color: #888; } .dim svg { opacity: .5; }
.blue { color: #2b55c4; } .green { color: #429a46; } .mag { color: #a8219c; } .navy { color: #2c4687; } .orange { color: #cc6a14; } .red { color: #b8341b; } .sky { color: #2d7dc0; }
footer { flex: 1; background: #fff; border-top: 1px solid #dedede; padding: 14px 0 0 15px; font-size: 12px; line-height: 16px; font-weight: 600; letter-spacing: .25px; }
```
